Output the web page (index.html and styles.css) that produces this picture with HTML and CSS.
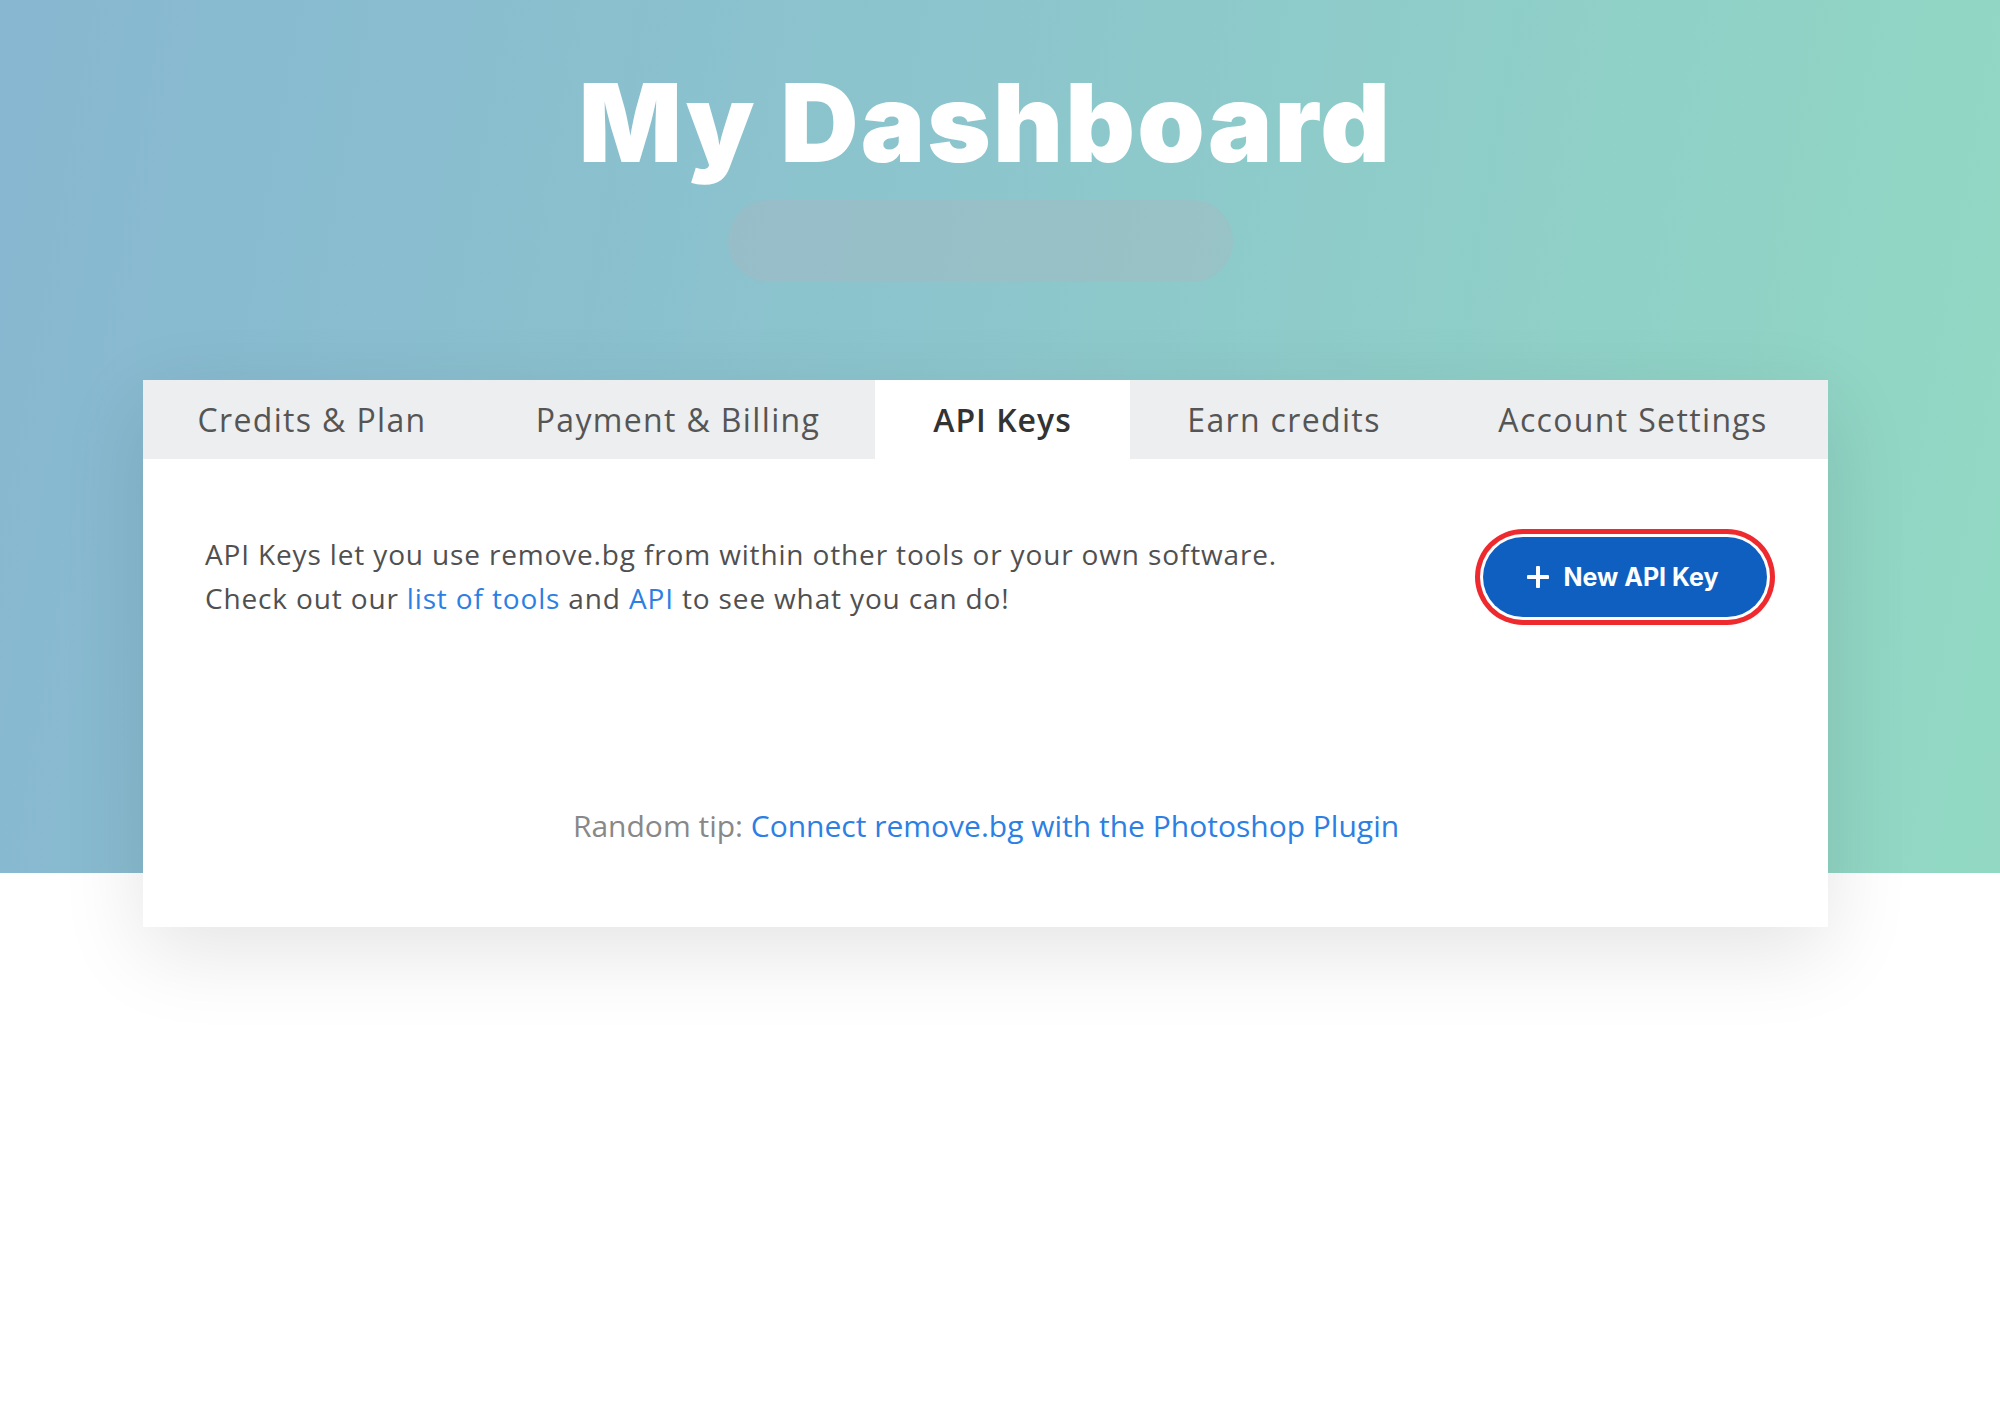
FILE: index.html
```html
<!DOCTYPE html>
<html lang="en">
<head>
<meta charset="utf-8">
<title>My Dashboard</title>
<link rel="stylesheet" href="styles.css">
</head>
<body>
<main class="page">
  <h1 class="title">My Dashboard</h1>
  <div class="pill"></div>
  <section class="card">
    <nav class="tabs">
      <a class="tab">Credits &amp; Plan</a>
      <a class="tab">Payment &amp; Billing</a>
      <a class="tab active">API Keys</a>
      <a class="tab">Earn credits</a>
      <a class="tab">Account Settings</a>
    </nav>
    <div class="card-body">
      <div class="intro">
        <p class="intro-text">API Keys let you use remove.bg from within other tools or your own software.<br>Check out our <a class="link">list of tools</a> and <a class="link">API</a> to see what you can do!</p>
        <button class="new-key">
          <svg class="plus" viewBox="0 0 22 22" width="22" height="22"><path d="M11 1.5v19M1.5 11h19" stroke="#fff" stroke-width="4" stroke-linecap="round" fill="none"/></svg>
          <span>New API Key</span>
        </button>
      </div>
      <p class="tip">Random tip: <a class="link">Connect remove.bg with the Photoshop Plugin</a></p>
    </div>
  </section>
</main>
</body>
</html>
```
FILE: styles.css
```css
html, body {
  margin: 0;
  padding: 0;
}
body {
  width: 2000px;
  min-height: 1414px;
  background: #fff linear-gradient(100deg, #87b7d1 0%, #8cc5cd 45%, #92d9c3 100%) no-repeat;
  background-size: 100% 873px;
  font-family: "Open Sans", "Noto Sans", sans-serif;
}
.page {
  display: flex;
  flex-direction: column;
  align-items: center;
  padding: 69px 172px 0 143px;
}
.title {
  margin: 0;
  font-family: Inter, "Open Sans", sans-serif;
  font-weight: 900;
  font-size: 108px;
  line-height: 108px;
  letter-spacing: 2.2px;
  color: #fff;
}
.pill {
  margin: 23px 11px 0 0;
  width: 505px;
  height: 82px;
  border-radius: 41px;
  background: rgba(178, 180, 190, 0.3);
}
.card {
  margin-top: 98px;
  width: 1685px;
  background: #fff;
  box-shadow: 0 24px 80px rgba(0, 0, 0, 0.11);
}
.tabs {
  display: grid;
  grid-template-columns: 338px 394px 255px 308px 390px;
  height: 79px;
  background: #edeef0;
}
.tab {
  display: flex;
  align-items: center;
  justify-content: center;
  font-size: 32px;
  letter-spacing: 1.35px;
  color: #555;
}
.tab.active {
  background: #fff;
  color: #333;
  font-weight: 600;
  letter-spacing: 1px;
}
.card-body {
  padding: 74px 61px 79px 62px;
}
.intro {
  display: flex;
  align-items: center;
  justify-content: space-between;
}
.intro-text {
  margin: 0;
  font-size: 28px;
  line-height: 43.5px;
  letter-spacing: 0.85px;
  color: #505050;
}
.link {
  color: #2c7fe3;
}
.new-key {
  display: flex;
  align-items: center;
  justify-content: center;
  gap: 14px;
  width: 284px;
  height: 80px;
  border: 0;
  border-radius: 40px;
  background: #0f5fc1;
  color: #fff;
  font-family: Inter, sans-serif;
  font-weight: 700;
  font-size: 25px;
  box-shadow: 0 0 0 3px #fff, 0 0 0 8px #ee2a2f;
  padding: 0 4px 0 0;
}
.plus {
  display: block;
}
.tip {
  margin: 184px 0 0;
  text-align: center;
  font-size: 30px;
  line-height: 44px;
  color: #888;
}
```
